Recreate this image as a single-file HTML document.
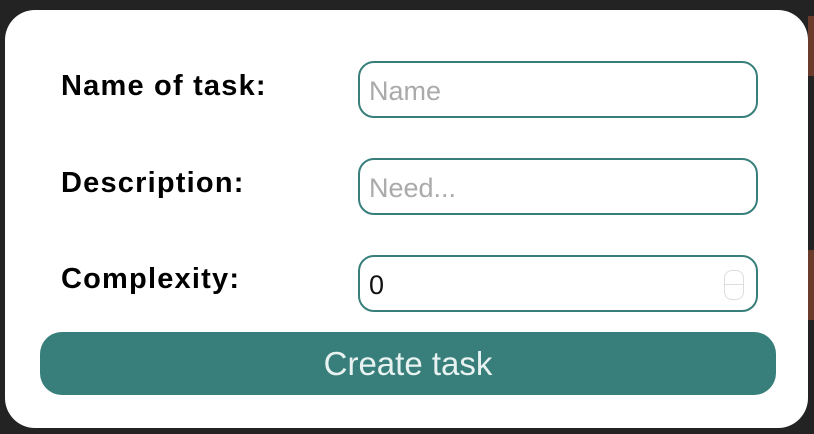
<!DOCTYPE html>
<html><head><style>
body{margin:0;width:814px;height:434px;background:#232323;position:relative;overflow:hidden;font-family:"Liberation Sans",sans-serif}
.r1{position:absolute;left:808px;top:16px;width:6px;height:60px;background:#6a3a2a}
.r2{position:absolute;left:808px;top:250px;width:6px;height:70px;background:#6a3a2a}
.modal{position:absolute;left:5px;top:10px;width:803px;height:418px;background:#fff;border-radius:30px}
.lbl{position:absolute;left:61px;font-size:29px;font-weight:bold;color:#000;letter-spacing:1.2px}
.in{position:absolute;left:358px;width:396px;height:53px;border:2px solid #387f7b;border-radius:16px;box-sizing:content-box;font-size:27px;line-height:53px}
.in span{position:absolute;left:9px;top:2px}
.btn{position:absolute;left:40px;top:332px;width:736px;height:63px;background:#387f7b;border-radius:22px;color:#e8f2f1;font-size:33px;text-align:center;line-height:63px}
.spin{position:absolute;left:364px;top:13px;width:18px;height:28px;border:1px solid #ddd;border-radius:8px}
.spin:after{content:"";position:absolute;left:0;right:0;top:13px;border-top:1px solid #ddd}
</style></head><body>
<div class="r1"></div><div class="r2"></div>
<div class="modal"></div>
<div class="lbl" style="top:70px">Name of task:</div>
<div class="lbl" style="top:167px">Description:</div>
<div class="lbl" style="top:263px">Complexity:</div>
<div class="in" style="top:61px"><span style="color:#aaa">Name</span></div>
<div class="in" style="top:158px"><span style="color:#aaa">Need...</span></div>
<div class="in" style="top:255px"><span style="color:#111">0</span><div class="spin"></div></div>
<div class="btn">Create task</div>
</body></html>
